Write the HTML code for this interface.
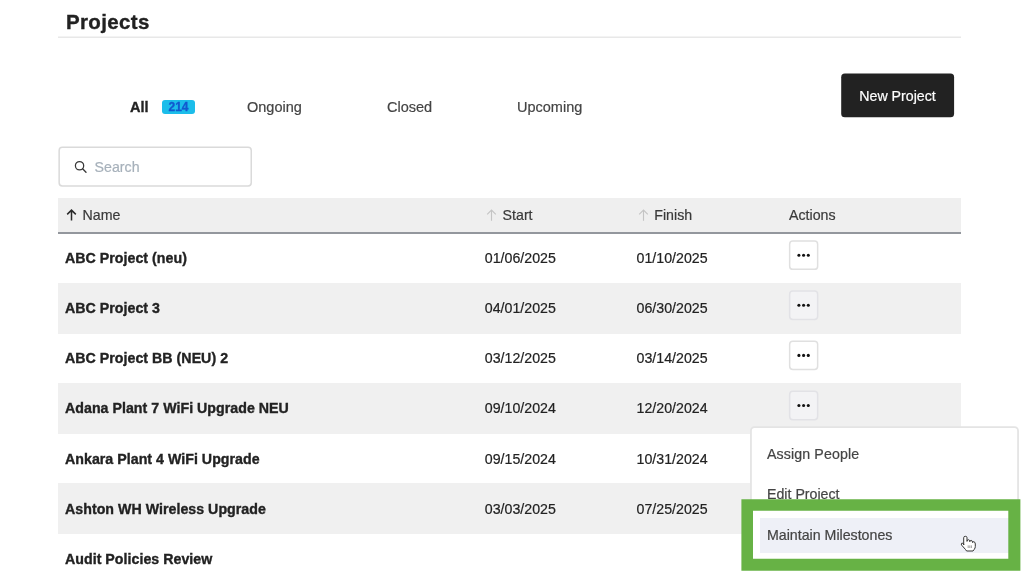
<!DOCTYPE html>
<html>
<head>
<meta charset="utf-8">
<title>Projects</title>
<style>
*{box-sizing:border-box;margin:0;padding:0}
html,body{width:1024px;height:575px;overflow:hidden;background:#fff}
body{font-family:"Liberation Sans",sans-serif;color:#222;position:relative}
.abs{position:absolute;white-space:nowrap;line-height:1;-webkit-text-stroke:.2px currentColor}
#title,#t-all,.nm{-webkit-text-stroke:.35px currentColor}
#title{left:66px;top:12px;font-size:20.5px;font-weight:bold;color:#222;letter-spacing:.34px}
#rule{left:58px;top:36px;width:903px;height:2px;background:linear-gradient(#f3f3f3 50%,#e8e8e8 50%)}
.tab{font-size:14.5px;color:#444;top:99.5px}
#t-all{left:130px;font-weight:bold;color:#222}
#badge{left:162px;top:100px;width:33px;height:14px;background:#1cbdea;border-radius:3px;color:#1259cf;-webkit-text-stroke:.3px currentColor;font-size:12px;font-weight:bold;text-align:center;line-height:14px}
#newbtn{left:841px;top:74px;width:113px;height:43px;color:#fff;font-size:14.2px;text-align:center;line-height:44.2px}
#stext{left:94.6px;top:159.7px;font-size:14.2px;color:#a7b1bb}
#thead{left:58px;top:198px;width:903px;height:36px;background:#efefef;border-bottom:2px solid #93979d}
.th{font-size:14.2px;color:#3a3a3a;top:207.8px}
.ar{top:209px}
.row{left:58px;width:903px;height:51px;background:#f0f0f0}
.nm{left:65px;font-size:14.2px;font-weight:bold;color:#222;letter-spacing:.03px}
.dt{font-size:14.2px;color:#222}
.mi{font-size:14.2px;color:#444;left:767px}
#hl{left:760px;top:518px;width:249px;height:35px;background:#eef0f7}
#green{left:0;top:0}
#cursor{left:960px;top:535px}
#wrap{position:absolute;left:0;top:0;width:1024px;height:575px;will-change:transform}
</style>
</head>
<body><div id="wrap">
<div id="title" class="abs">Projects</div>
<div id="rule" class="abs"></div>

<div id="t-all" class="abs tab">All</div>
<div id="badge" class="abs">214</div>
<div class="abs tab" style="left:247px">Ongoing</div>
<div class="abs tab" style="left:387px">Closed</div>
<div class="abs tab" style="left:517px">Upcoming</div>
<svg class="abs" style="left:0;top:0" width="1024" height="130" viewBox="0 0 1024 130"><rect x="841.2" y="73.6" width="112.9" height="43.7" rx="3.6" fill="#222"/></svg>
<div id="newbtn" class="abs">New Project</div>

<svg id="search" class="abs" style="left:0;top:0" width="300" height="200" viewBox="0 0 300 200"><rect x="59.15" y="147.35" width="192.1" height="38.6" rx="3.2" fill="#fff" stroke="#dadada" stroke-width="1.5"/><circle cx="79.55" cy="165.75" r="4.15" fill="none" stroke="#383838" stroke-width="1.25"/><path d="M82.6 168.8 L86 172.2" stroke="#383838" stroke-width="1.35" stroke-linecap="round"/></svg>
<div id="stext" class="abs">Search</div>

<div id="thead" class="abs"></div>
<svg class="abs ar" style="left:66px" width="11" height="12" viewBox="0 0 11 12"><path d="M5.5 11.5 V1.2 M1.2 5.4 L5.5 1.1 L9.8 5.4" fill="none" stroke="#2a2a2a" stroke-width="1.5"/></svg>
<div class="abs th" style="left:82.5px">Name</div>
<svg class="abs ar" style="left:486px" width="11" height="12" viewBox="0 0 11 12"><path d="M5.5 11.8 V1.2 M1.2 5.4 L5.5 1.1 L9.8 5.4" fill="none" stroke="#c4c4c4" stroke-width="1.1"/></svg>
<div class="abs th" style="left:502.6px">Start</div>
<svg class="abs ar" style="left:638px" width="11" height="12" viewBox="0 0 11 12"><path d="M5.5 11.8 V1.2 M1.2 5.4 L5.5 1.1 L9.8 5.4" fill="none" stroke="#c4c4c4" stroke-width="1.1"/></svg>
<div class="abs th" style="left:654.3px">Finish</div>
<div class="abs th" style="left:789px">Actions</div>

<div class="abs row" style="top:283px"></div>
<div class="abs row" style="top:383px"></div>
<div class="abs row" style="top:483px"></div>

<div class="abs nm" style="top:251px">ABC Project (neu)</div>
<div class="abs nm" style="top:301px">ABC Project 3</div>
<div class="abs nm" style="top:351px">ABC Project BB (NEU) 2</div>
<div class="abs nm" style="top:401px">Adana Plant 7 WiFi Upgrade NEU</div>
<div class="abs nm" style="top:452px">Ankara Plant 4 WiFi Upgrade</div>
<div class="abs nm" style="top:502px">Ashton WH Wireless Upgrade</div>
<div class="abs nm" style="top:552px">Audit Policies Review</div>

<div class="abs dt" style="left:484.8px;top:251px">01/06/2025</div>
<div class="abs dt" style="left:484.8px;top:301px">04/01/2025</div>
<div class="abs dt" style="left:484.8px;top:351px">03/12/2025</div>
<div class="abs dt" style="left:484.8px;top:401px">09/10/2024</div>
<div class="abs dt" style="left:484.8px;top:452px">09/15/2024</div>
<div class="abs dt" style="left:484.8px;top:502px">03/03/2025</div>

<div class="abs dt" style="left:636.6px;top:251px">01/10/2025</div>
<div class="abs dt" style="left:636.6px;top:301px">06/30/2025</div>
<div class="abs dt" style="left:636.6px;top:351px">03/14/2025</div>
<div class="abs dt" style="left:636.6px;top:401px">12/20/2024</div>
<div class="abs dt" style="left:636.6px;top:452px">10/31/2024</div>
<div class="abs dt" style="left:636.6px;top:502px">07/25/2025</div>


<svg id="btns" class="abs" style="left:0;top:0" width="1024" height="575" viewBox="0 0 1024 575"><rect x="789.65" y="240.95" width="28" height="28.4" rx="3.2" fill="#fff" stroke="#e0e0e0" stroke-width="1.5"/><circle cx="798.9" cy="255.20" r="1.55" fill="#111"/><circle cx="803.6" cy="255.20" r="1.55" fill="#111"/><circle cx="808.3" cy="255.20" r="1.55" fill="#111"/><rect x="789.65" y="291.05" width="28" height="28.4" rx="3.2" fill="#f3f3f5" stroke="#e2e2e6" stroke-width="1.5"/><circle cx="798.9" cy="305.30" r="1.55" fill="#111"/><circle cx="803.6" cy="305.30" r="1.55" fill="#111"/><circle cx="808.3" cy="305.30" r="1.55" fill="#111"/><rect x="789.65" y="341.15" width="28" height="28.4" rx="3.2" fill="#fff" stroke="#e0e0e0" stroke-width="1.5"/><circle cx="798.9" cy="355.40" r="1.55" fill="#111"/><circle cx="803.6" cy="355.40" r="1.55" fill="#111"/><circle cx="808.3" cy="355.40" r="1.55" fill="#111"/><rect x="789.65" y="391.25" width="28" height="28.4" rx="3.2" fill="#f3f3f5" stroke="#e2e2e6" stroke-width="1.5"/><circle cx="798.9" cy="405.50" r="1.55" fill="#111"/><circle cx="803.6" cy="405.50" r="1.55" fill="#111"/><circle cx="808.3" cy="405.50" r="1.55" fill="#111"/></svg>
<svg id="menu" class="abs" style="left:0;top:0" width="1024" height="575" viewBox="0 0 1024 575"><rect x="750.95" y="427.2" width="267.1" height="139" rx="3.5" fill="#fff" stroke="#e4e4e4" stroke-width="1.8"/></svg>
<div id="hl" class="abs"></div>
<div class="abs mi" style="top:447px;letter-spacing:.12px">Assign People</div>
<div class="abs mi" style="top:487px">Edit Project</div>
<div class="abs mi" style="top:527.5px">Maintain Milestones</div>
<svg id="green" class="abs" width="1024" height="575" viewBox="0 0 1024 575"><path fill="#67b245" fill-rule="evenodd" d="M741.4 499.3 H1020.4 V570.8 H741.4 Z M753 510.8 V558.8 H1008.3 V510.8 Z"/></svg>
<svg id="cursor" class="abs" width="17" height="18" viewBox="-1 -1 17 18"><path d="M2.7 9 V1.7 Q2.7 .3 4.35 .3 Q6 .3 6 1.7 V5.4 Q6.1 3.6 7.5 3.7 Q8.8 3.8 8.8 5.7 Q9 4.3 10.2 4.4 Q11.5 4.5 11.5 6.5 Q11.7 5.6 12.9 5.8 Q14.3 6 14.3 8 V10.5 Q14.3 12 13.3 13.3 L12 15 H5.6 L4.5 13.5 L.7 9.2 Q-.2 7.9 .8 7.2 Q1.8 6.7 2.7 8.2 Z" fill="#fff" stroke="#2b2b2b" stroke-width=".95" stroke-linejoin="round"/><path d="M7.2 9.4 V12 M8.8 9.4 V12 M10.4 9.4 V12" stroke="#777" stroke-width=".7"/></svg>
</div></body>
</html>
